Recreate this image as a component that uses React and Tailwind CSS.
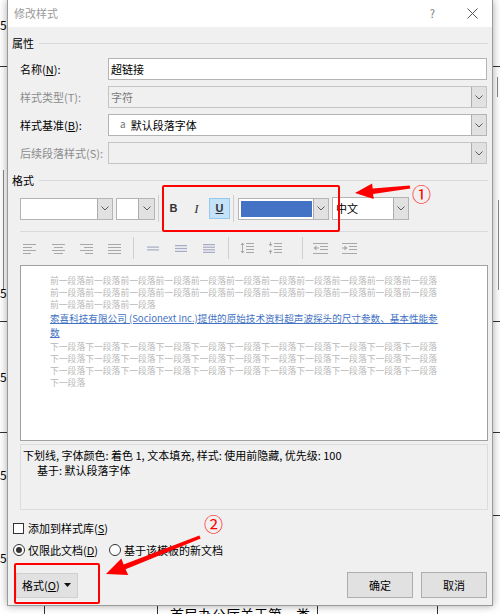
import React from "react";

function Chev() {
  return (
    <svg width="8" height="5" viewBox="0 0 8 5">
      <path d="M0.5 0.5L4 4L7.5 0.5" fill="none" stroke="#5a5a5a" strokeWidth="1" />
    </svg>
  );
}

function DropBtn({ className = "" }) {
  return (
    <div className={"flex items-center justify-center bg-[#e1e1e1] border-l border-[#adadad] h-full " + className}>
      <Chev />
    </div>
  );
}

const G = "#a8a8a8";

function Lines({ rows, w = 13, color = G }) {
  return (
    <svg width={w} height="11" viewBox={`0 0 ${w} 11`}>
      {rows.map(([x, len, y], i) => (
        <rect key={i} x={x} y={y} width={len} height="1" fill={color} />
      ))}
    </svg>
  );
}

function Spacing({ n }) {
  const c = "#a7abc4";
  const rows = [];
  const total = n === 2 ? 4 : n === 3 ? 7 : 9;
  const start = (11 - total) / 2;
  for (let i = 0; i < n; i++) {
    rows.push(<rect key={i} x="0" y={start + (i * (total - 1.2)) / (n - 1)} width="12" height="1.2" fill={c} />);
  }
  return (
    <svg width="12" height="11" viewBox="0 0 12 11">
      {rows}
    </svg>
  );
}

function Sep({ className = "" }) {
  return <div className={"w-px bg-[#cfcfcf] " + className} />;
}

export default function App() {
  return (
    <div className="relative w-[500px] h-[614px] overflow-hidden bg-white font-['Noto_Sans_CJK_SC',sans-serif] text-[11px] text-black">
      {/* background document */}
      <div className="absolute left-0 top-[66px] w-[7px] h-px bg-[#333]" />
      <div className="absolute left-0 top-[321px] w-[7px] h-px bg-[#333]" />
      <div className="absolute left-0 top-[432px] w-[7px] h-px bg-[#333]" />
      <div className="absolute left-[3px] top-[170px] w-px h-[120px] bg-[#888]" />
      <div className="absolute left-0 top-[17px] text-[12px] leading-[16px]">5:</div>
      <div className="absolute left-0 top-[285px] text-[12px] leading-[16px]">5</div>
      <div className="absolute left-0 top-[369px] text-[12px] leading-[16px]">5</div>
      <div className="absolute left-0 top-[467px] text-[12px] leading-[16px]">5</div>
      <div className="absolute left-0 top-[550px] text-[12px] leading-[16px]">5</div>
      <div className="absolute left-[493px] top-[66px] w-[7px] h-px bg-[#333]" />
      <div className="absolute left-[493px] top-[321px] w-[7px] h-px bg-[#333]" />
      <div className="absolute left-[493px] top-[432px] w-[7px] h-px bg-[#333]" />
      <div className="absolute left-[493px] top-[515px] w-[7px] h-px bg-[#333]" />
      <div className="absolute left-[497px] top-[77px] w-px h-[20px] bg-[#888]" />
      <div className="absolute left-[498px] top-[200px] w-px h-[90px] bg-[#888]" />
      <div className="absolute left-[44px] top-[598px] w-px h-[16px] bg-[#333]" />
      <div className="absolute left-[157px] top-[598px] w-px h-[16px] bg-[#333]" />
      <div className="absolute left-[317px] top-[598px] w-px h-[16px] bg-[#333]" />
      <div className="absolute left-[437px] top-[598px] w-px h-[16px] bg-[#333]" />
      <div className="absolute left-[170px] top-[606px] text-[14px] leading-[16px] whitespace-nowrap">首局办公厅关于第一类</div>

      {/* dialog */}
      <div className="relative z-10 ml-[7px] w-[486px] h-[606px] flex flex-col bg-[#f0f0f0] border-l border-r border-b border-[#9a9a9a] shadow-[0_0_8px_rgba(0,0,0,0.35)]">
        {/* title bar */}
        <div className="h-[27px] bg-white flex items-center pl-[6px] shrink-0">
          <span className="text-[#9a9a9a] text-[11px]">修改样式</span>
          <span className="ml-auto text-[#777] text-[11px] mr-[32px]">?</span>
          <svg width="11" height="11" viewBox="0 0 11 11" className="mr-[14px]">
            <path d="M0.5 0.5L10.5 10.5M10.5 0.5L0.5 10.5" stroke="#555" strokeWidth="1" />
          </svg>
        </div>

        <div className="flex flex-col pl-[12px] pr-[4px]">
          {/* 属性 header */}
          <div className="flex items-center h-[16px] mt-[8px] -ml-[8px]">
            <span>属性</span>
            <div className="flex-1 h-px bg-[#dadada] ml-[5px]" />
          </div>

          {/* rows */}
          <div className="flex flex-col gap-[6px] mt-[7px]">
            <div className="flex items-center h-[22px]">
              <div className="w-[88px]">
                名称(<u>N</u>):
              </div>
              <div className="w-[379px] h-full border border-[#b4b4b4] bg-white flex items-center pl-[2px]">超链接</div>
            </div>
            <div className="flex items-center h-[22px]">
              <div className="w-[88px] text-[#8c8c8c]">样式类型(T):</div>
              <div className="w-[379px] h-full border border-[#c4c4c4] bg-[#f0f0f0] flex items-center">
                <span className="pl-[2px] flex-1 text-[#7a7a7a]">字符</span>
                <DropBtn className="w-[15px]" />
              </div>
            </div>
            <div className="flex items-center h-[22px]">
              <div className="w-[88px]">
                样式基准(<u>B</u>):
              </div>
              <div className="w-[379px] h-full border border-[#b4b4b4] bg-white flex items-center">
                <span className="ml-[11px] text-[10px] text-[#777] relative -top-[2px]">a</span>
                <span className="ml-[5px] flex-1">默认段落字体</span>
                <DropBtn className="w-[15px]" />
              </div>
            </div>
            <div className="flex items-center h-[22px]">
              <div className="w-[88px] text-[#8c8c8c]">后续段落样式(S):</div>
              <div className="w-[379px] h-full border border-[#c4c4c4] bg-[#f0f0f0] flex items-center">
                <span className="flex-1" />
                <DropBtn className="w-[15px]" />
              </div>
            </div>
          </div>

          {/* 格式 header */}
          <div className="flex items-center h-[16px] mt-[8px] -ml-[8px]">
            <span>格式</span>
            <div className="flex-1 h-px bg-[#dadada] ml-[5px]" />
          </div>

          {/* toolbar row 1 */}
          <div className="flex items-center h-[27px] mt-[7px]">
            <div className="w-[93px] h-[22px] border border-[#b4b4b4] bg-white flex">
              <div className="flex-1" />
              <DropBtn className="w-[15px]" />
            </div>
            <div className="ml-[3px] w-[39px] h-[22px] border border-[#b4b4b4] bg-white flex">
              <div className="flex-1" />
              <DropBtn className="w-[16px]" />
            </div>
            <Sep className="ml-[3px] h-[27px]" />
            <div className="ml-[4px] w-[21px] h-[21px] flex items-center justify-center font-['Liberation_Sans',sans-serif] font-bold text-[11px] text-[#333]">B</div>
            <div className="ml-[2px] w-[21px] h-[21px] flex items-center justify-center font-['Liberation_Serif',serif] italic text-[13px] text-[#333]">I</div>
            <div className="ml-[2px] w-[21px] h-[21px] flex items-center justify-center bg-[#c4e2f8] border border-[#96c8ee] font-['Liberation_Sans',sans-serif] font-bold text-[11px] text-[#333] underline">U</div>
            <Sep className="ml-[3px] h-[27px]" />
            <div className="ml-[4px] w-[91px] h-[22px] border border-[#b4b4b4] bg-white flex items-center">
              <div className="ml-[2px] w-[71px] h-[16px] bg-[#4472c4]" />
              <div className="flex-1" />
              <DropBtn className="w-[15px]" />
            </div>
            <div className="ml-[3px] w-[77px] h-[23px] border border-[#b4b4b4] bg-white flex items-center">
              <span className="pl-[3px] flex-1">中文</span>
              <DropBtn className="w-[15px]" />
            </div>
          </div>

          {/* separator line */}
          <div className="h-px bg-[#dadada] mt-[9px]" />

          {/* toolbar row 2 */}
          <div className="flex items-center h-[22px] mt-[5px]">
            <div className="ml-[3px]">
              <Lines rows={[[0, 13, 1], [0, 9, 4], [0, 13, 7], [0, 8, 10]]} />
            </div>
            <div className="ml-[16px]">
              <Lines rows={[[0, 13, 1], [2, 9, 4], [0, 13, 7], [2, 9, 10]]} />
            </div>
            <div className="ml-[15px]">
              <Lines rows={[[0, 13, 1], [4, 9, 4], [0, 13, 7], [5, 8, 10]]} />
            </div>
            <div className="ml-[15px]">
              <Lines rows={[[0, 13, 1], [0, 13, 4], [0, 13, 7], [0, 13, 10]]} />
            </div>
            <Sep className="ml-[12px] h-[22px]" />
            <div className="ml-[13px]">
              <Spacing n={2} />
            </div>
            <div className="ml-[16px]">
              <Spacing n={3} />
            </div>
            <div className="ml-[16px]">
              <Spacing n={4} />
            </div>
            <Sep className="ml-[13px] h-[22px]" />
            <div className="ml-[11px]">
              <svg width="14" height="12" viewBox="0 0 14 12">
                <path d="M2.5 0.5L0.5 3H4.5Z M2.5 11.5L0.5 9H4.5Z" fill={G} />
                <rect x="2" y="3" width="1" height="6" fill={G} />
                <rect x="6" y="1" width="8" height="1" fill={G} />
                <rect x="6" y="4" width="8" height="1" fill={G} />
                <rect x="6" y="7" width="8" height="1" fill={G} />
                <rect x="6" y="10" width="8" height="1" fill={G} />
              </svg>
            </div>
            <div className="ml-[14px]">
              <svg width="14" height="12" viewBox="0 0 14 12">
                <path d="M2.5 4.5L0.5 2H4.5Z M2.5 7.5L0.5 10H4.5Z" fill={G} />
                <rect x="2" y="0" width="1" height="2" fill={G} />
                <rect x="2" y="10" width="1" height="2" fill={G} />
                <rect x="6" y="1" width="8" height="1" fill={G} />
                <rect x="6" y="4" width="8" height="1" fill={G} />
                <rect x="6" y="7" width="8" height="1" fill={G} />
                <rect x="6" y="10" width="8" height="1" fill={G} />
              </svg>
            </div>
            <Sep className="ml-[20px] h-[22px]" />
            <div className="ml-[10px]">
              <svg width="15" height="11" viewBox="0 0 15 11">
                <rect x="0" y="0" width="15" height="1" fill={G} />
                <rect x="7" y="3" width="8" height="1" fill={G} />
                <rect x="7" y="6" width="8" height="1" fill={G} />
                <rect x="0" y="10" width="15" height="1" fill={G} />
                <path d="M0.5 5L3.5 2.5V7.5Z" fill={G} />
                <rect x="3" y="4.5" width="3" height="1" fill={G} />
              </svg>
            </div>
            <div className="ml-[14px]">
              <svg width="15" height="11" viewBox="0 0 15 11">
                <rect x="0" y="0" width="15" height="1" fill={G} />
                <rect x="7" y="3" width="8" height="1" fill={G} />
                <rect x="7" y="6" width="8" height="1" fill={G} />
                <rect x="0" y="10" width="15" height="1" fill={G} />
                <path d="M5.5 5L2.5 2.5V7.5Z" fill={G} />
                <rect x="0" y="4.5" width="3" height="1" fill={G} />
              </svg>
            </div>
          </div>

          {/* preview */}
          <div className="mt-[6px] h-[176px] border border-[#a0a0a0] bg-white pl-[29px] pt-[9px] overflow-hidden">
            <div className="text-[8.8px] leading-[12px] text-[#b8b8b8] whitespace-nowrap">
              <div>{"前一段落".repeat(11)}</div>
              <div>{"前一段落".repeat(11)}</div>
              <div>{"前一段落".repeat(3)}</div>
            </div>
            <div className="text-[9.6px] leading-[14px] text-[#4472c4] underline whitespace-nowrap">
              <div>索喜科技有限公司 (Socionext Inc.)提供的原始技术资料超声波探头的尺寸参数、基本性能参</div>
              <div>数</div>
            </div>
            <div className="mt-[2px] text-[8.8px] leading-[12px] text-[#b8b8b8] whitespace-nowrap">
              <div>{"下一段落".repeat(11)}</div>
              <div>{"下一段落".repeat(11)}</div>
              <div>{"下一段落".repeat(11)}</div>
              <div>下一段落</div>
            </div>
          </div>

          {/* description */}
          <div className="mt-[3px] h-[66px] border border-[#dcdcdc] pl-[2px] pt-[3px] leading-[15px]">
            <div>下划线, 字体颜色: 着色 1, 文本填充, 样式: 使用前隐藏, 优先级: 100</div>
            <div className="pl-[14px]">基于: 默认段落字体</div>
          </div>

          {/* checkbox */}
          <div className="flex items-center h-[16px] mt-[10px] -ml-[7px]">
            <div className="w-[11px] h-[11px] border border-[#333] bg-white" />
            <span className="ml-[4px]">
              添加到样式库(<u>S</u>)
            </span>
          </div>

          {/* radios */}
          <div className="flex items-center h-[16px] mt-[6px] -ml-[7px]">
            <div className="w-[12px] h-[12px] rounded-full border border-[#333] bg-white flex items-center justify-center">
              <div className="w-[6px] h-[6px] rounded-full bg-[#333]" />
            </div>
            <span className="ml-[3px]">
              仅限此文档(<u>D</u>)
            </span>
            <div className="ml-[11px] w-[12px] h-[12px] rounded-full border border-[#333] bg-white" />
            <span className="ml-[3px]">基于该模板的新文档</span>
          </div>

          {/* buttons */}
          <div className="flex items-center mt-[14px] h-[26px]">
            <div className="-ml-[4px] w-[62px] h-[25px] bg-[#e1e1e1] border border-[#d0d0d0] flex items-center pl-[5px]">
              <span>
                格式(<u>O</u>)
              </span>
              <svg width="7" height="4" viewBox="0 0 7 4" className="ml-[4px]">
                <path d="M0 0H7L3.5 4Z" fill="#111" />
              </svg>
            </div>
            <div className="ml-auto w-[66px] h-[26px] bg-[#e1e1e1] border border-[#adadad] flex items-center justify-center">确定</div>
            <div className="ml-[8px] mr-[1px] w-[66px] h-[26px] bg-[#e1e1e1] border border-[#adadad] flex items-center justify-center">取消</div>
          </div>
        </div>
      </div>

      {/* annotations */}
      <div className="absolute z-20 left-[162px] top-[185px] w-[178px] h-[47px] border-2 border-[#ff0000] rounded-[2px]" />
      <div className="absolute z-20 left-[14px] top-[563px] w-[86px] h-[41px] border-2 border-[#ff0000] rounded-[2px]" />
      <svg className="absolute z-20 left-0 top-0" width="500" height="614" viewBox="0 0 500 614">
        <polygon
          points="355,193 373.7,199 373.1,194 410.3,188.5 409.7,185.5 372.7,188.6 372.1,183.6"
          fill="#ff0000"
        />
        <polygon
          points="106,574 128.2,575 125.6,569.3 200.7,538.4 199.3,535.6 123.6,564.4 121.4,558.6"
          fill="#ff0000"
        />
      </svg>
      <div className="absolute z-20 left-[412px] top-[182px] text-[19px] leading-[24px] text-[#ff0000]">①</div>
      <div className="absolute z-20 left-[204px] top-[512px] text-[19px] leading-[24px] text-[#ff0000]">②</div>
    </div>
  );
}
